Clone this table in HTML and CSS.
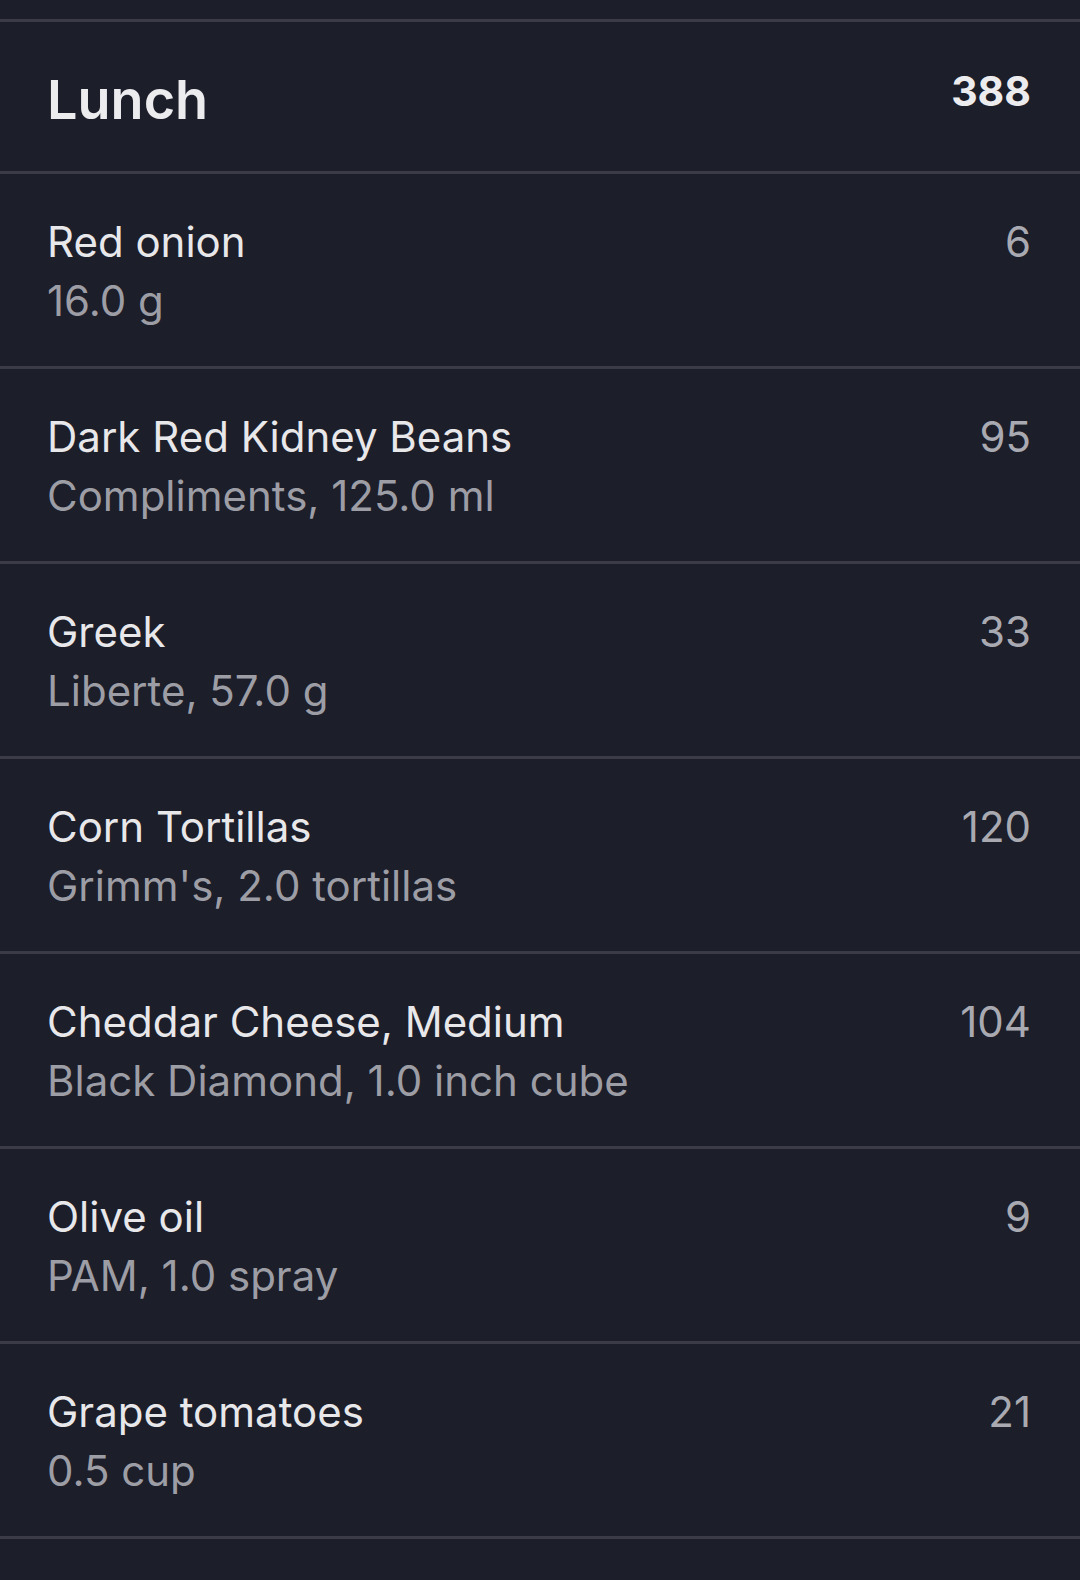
FILE: index.html
```html
<!DOCTYPE html>
<html>
<head>
<meta charset="utf-8">
<link rel="stylesheet" href="styles.css">
</head>
<body>
<div class="page">
  <section class="meal">
    <header class="meal-head">
      <h2 class="meal-title">Lunch</h2>
      <span class="meal-total">388</span>
    </header>
    <ul class="items">
      <li class="item"><div class="info"><div class="name">Red onion</div><div class="detail">16.0 g</div></div><div class="cal">6</div></li>
      <li class="item"><div class="info"><div class="name">Dark Red Kidney Beans</div><div class="detail">Compliments, 125.0 ml</div></div><div class="cal">95</div></li>
      <li class="item"><div class="info"><div class="name">Greek</div><div class="detail">Liberte, 57.0 g</div></div><div class="cal">33</div></li>
      <li class="item"><div class="info"><div class="name">Corn Tortillas</div><div class="detail">Grimm's, 2.0 tortillas</div></div><div class="cal">120</div></li>
      <li class="item"><div class="info"><div class="name">Cheddar Cheese, Medium</div><div class="detail">Black Diamond, 1.0 inch cube</div></div><div class="cal">104</div></li>
      <li class="item"><div class="info"><div class="name">Olive oil</div><div class="detail">PAM, 1.0 spray</div></div><div class="cal">9</div></li>
      <li class="item"><div class="info"><div class="name">Grape tomatoes</div><div class="detail">0.5 cup</div></div><div class="cal">21</div></li>
    </ul>
  </section>
</div>
</body>
</html>
```

FILE: styles.css
```css
html, body {
  margin: 0;
  padding: 0;
  background: #1c1e29;
}
body {
  font-family: Inter, "Noto Sans", sans-serif;
  color: #e9e9ec;
}
.page {
  width: 1080px;
  min-height: 1580px;
  padding-top: 19px;
  box-sizing: border-box;
}
.meal {
  border-top: 3px solid #3a3b46;
}
.meal-head {
  display: flex;
  justify-content: space-between;
  align-items: flex-start;
  padding: 45px 49px 38px 47px;
  height: 66px;
  border-bottom: 3px solid #3a3b46;
}
.meal-title {
  margin: 0;
  font-size: 54px;
  line-height: 66px;
  font-weight: 600;
  color: #ececef;
}
.meal-total {
  font-size: 41px;
  line-height: 49px;
  font-weight: 700;
  color: #ececef;
}
.items {
  list-style: none;
  margin: 0;
  padding: 0;
}
.item {
  display: flex;
  justify-content: space-between;
  align-items: flex-start;
  padding: 38px 49px 36px 47px;
  border-bottom: 3px solid #3a3b46;
}
.name {
  font-size: 42px;
  line-height: 59px;
  font-weight: 400;
  color: #e8e8eb;
}
.detail {
  font-size: 42px;
  line-height: 59px;
  color: #9c9da5;
}
.cal {
  font-size: 42px;
  line-height: 59px;
  color: #a9aab1;
}
```
